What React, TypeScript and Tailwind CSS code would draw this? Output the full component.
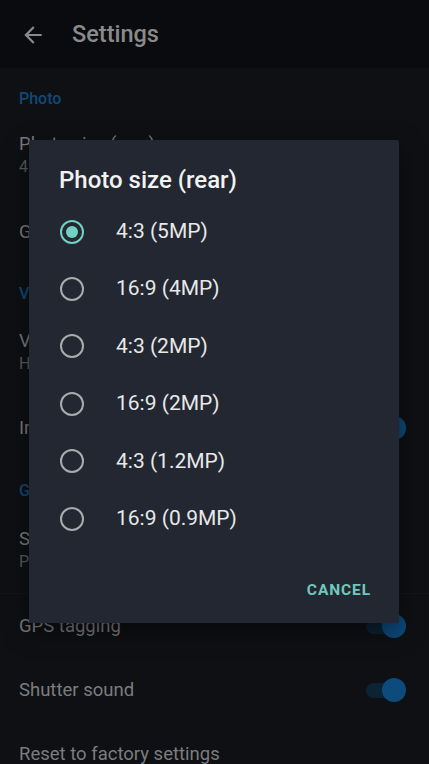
import React from 'react';

const options = ['4:3 (5MP)', '16:9 (4MP)', '4:3 (2MP)', '16:9 (2MP)', '4:3 (1.2MP)', '16:9 (0.9MP)'];

function Toggle() {
  return (
    <div className="relative w-[42px] h-[24px] flex items-center">
      <div className="w-[36px] h-[15px] rounded-full bg-[#0b2334] ml-[2px]" />
      <div className="absolute right-0 top-0 w-[24px] h-[24px] rounded-full bg-[#0c4b7c]" />
    </div>
  );
}

function Row({ title, sub, toggle, className = '' }: { title: string; sub?: string; toggle?: boolean; className?: string }) {
  return (
    <div className={`h-[64px] flex items-center justify-between pl-[19px] pr-[23px] ${className}`}>
      <div className="flex flex-col">
        <div className="text-[18.5px] leading-[24px] text-[#7c7c7e]">{title}</div>
        {sub && <div className="text-[16px] leading-[22px] text-[#5b5c5f]">{sub}</div>}
      </div>
      {toggle && <Toggle />}
    </div>
  );
}

function Section({ title, className = '' }: { title: string; className?: string }) {
  return (
    <div className={`h-[24px] flex items-center pl-[19px] text-[16px] font-medium text-[#0f4a77] ${className}`}>
      {title}
    </div>
  );
}

export default function App() {
  return (
    <div className="relative w-[429px] h-[764px] overflow-hidden bg-[#0e1014]" style={{ fontFamily: 'Roboto, "Noto Sans", sans-serif' }}>
      {/* dimmed settings screen */}
      <div className="h-[68px] bg-[#0a0b0e] flex items-center pt-[2px]">
        <svg width="26" height="26" viewBox="0 0 24 24" className="ml-[20px] fill-[#8a8a8c]">
          <path d="M20 11H7.83l5.59-5.59L12 4l-8 8 8 8 1.41-1.41L7.83 13H20v-2z" />
        </svg>
        <div className="ml-[26px] text-[23.5px] font-medium text-[#8a8a8c]">Settings</div>
      </div>

      <Section title="Photo" className="mt-[19px]" />
      <Row title="Photo size (rear)" sub="4:3 (5MP)" className="mt-[11.5px]" />
      <Row title="Grid lines" className="mt-[13.5px]" />
      <Section title="Video" className="mt-[18px]" />
      <Row title="Video quality" sub="HD 720p" className="mt-[14px]" />
      <Row title="Image stabilization" toggle className="mt-[12px]" />
      <Section title="General" className="mt-[19px]" />
      <Row title="Storage location" sub="Phone" className="mt-[15px]" />
      <div className="border-t border-[#14161b] mt-[11px]" />
      <Row title="GPS tagging" toggle />
      <Row title="Shutter sound" toggle />
      <Row title="Reset to factory settings" />

      {/* dialog */}
      <div className="absolute left-[29px] top-[140px] w-[370px] h-[483px] bg-[#222731] rounded-[2px] shadow-[0_8px_24px_rgba(0,0,0,0.5)] flex flex-col">
        <div className="pt-[25px] pl-[30px] text-[24px] leading-[30px] font-medium text-[#f2f2f2]">Photo size (rear)</div>
        <div className="mt-[8px] flex flex-col">
          {options.map((o, i) => (
            <div key={o} className="h-[57.4px] flex items-center pl-[31px]">
              {i === 0 ? (
                <div className="w-[24px] h-[24px] rounded-full border-[2px] border-[#72cfc2] flex items-center justify-center">
                  <div className="w-[12px] h-[12px] rounded-full bg-[#72cfc2]" />
                </div>
              ) : (
                <div className="w-[24px] h-[24px] rounded-full border-[2px] border-[#a9abae]" />
              )}
              <div className="ml-[32px] text-[21px] text-[#e8e8e8]">{o}</div>
            </div>
          ))}
        </div>
        <div className="flex-1" />
        <div className="h-[48px] mb-[8px] flex items-center justify-end pr-[28px]">
          <div className="text-[15.5px] font-bold tracking-[0.9px] text-[#6fcabd]">CANCEL</div>
        </div>
      </div>
    </div>
  );
}
